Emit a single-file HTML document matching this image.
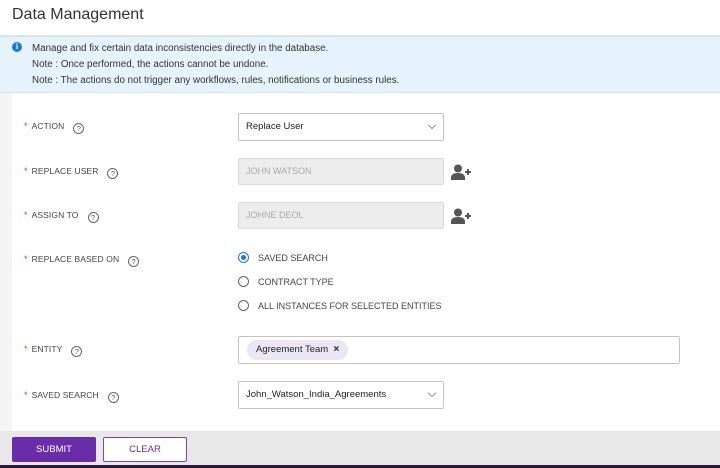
<!DOCTYPE html>
<html><head><meta charset="utf-8"><style>
*{box-sizing:border-box;margin:0;padding:0}
body{width:720px;height:468px;position:relative;background:#fff;font-family:"Liberation Sans",sans-serif;overflow:hidden;color:#333}
.abs{position:absolute}
.hdr{left:0;top:0;width:720px;height:36px;border-bottom:1px solid #e4e4e4}
.hdr span{position:absolute;left:12px;top:6px;font-size:16px;color:#333}
.info{left:0;top:36px;width:720px;height:57px;background:#e6f3fc;border-top:1px solid #cfe3f0;border-bottom:1px solid #d6e6f0;font-size:9.8px;color:#333;line-height:16px;padding:4px 0 0 32px}
.ico{left:12px;top:42px;width:10px;height:10px;border-radius:50%;background:#1a7fd6;color:#fff;font-size:8px;font-weight:bold;text-align:center;line-height:10px}
.strip{left:0;top:93px;width:12px;height:338px;background:#f4f4f4}
.lbl{left:24px;font-size:8.5px;color:#444;letter-spacing:0.1px}
.lbl b{color:#e33;font-weight:normal;margin-right:4px;font-size:9px}
.q{display:inline-block;width:11px;height:11px;border:1px solid #666;border-radius:50%;font-size:7.5px;text-align:center;line-height:9px;margin-left:9px;vertical-align:-2px;color:#555}
.box{border:1px solid #c4c4c4;border-radius:2px;background:#fff;font-size:9.5px;color:#222;padding-left:7px}
.dis{background:#ececec;border-color:#dadada;color:#aaa;font-size:9px}
.chev{position:absolute;right:8px;top:8px;width:6px;height:6px;border-right:1.3px solid #999;border-bottom:1.3px solid #999;transform:rotate(45deg)}
.rad{left:238px;width:11px;height:11px;border:1px solid #666;border-radius:50%}
.rt{left:258px;font-size:9px;color:#444}
.foot{left:0;top:431px;width:720px;height:34px;background:#e8e8e8}
.dark{left:0;top:465px;width:720px;height:3px;background:#2a1c3a}
</style></head><body>
<div class="abs hdr"><span>Data Management</span></div>
<div class="abs info">Manage and fix certain data inconsistencies directly in the database.<br>Note : Once performed, the actions cannot be undone.<br>Note : The actions do not trigger any workflows, rules, notifications or business rules.</div>
<div class="abs ico">i</div>
<div class="abs strip"></div>

<div class="abs lbl" style="top:121px"><b>*</b>ACTION<span class="q">?</span></div>
<div class="abs box" style="left:238px;top:113px;width:206px;height:28px;line-height:26px">Replace User<span class="chev"></span></div>

<div class="abs lbl" style="top:166px"><b>*</b>REPLACE USER<span class="q">?</span></div>
<div class="abs box dis" style="left:238px;top:158px;width:206px;height:27px;line-height:25px">JOHN WATSON</div>
<svg class="abs" style="left:451px;top:164px" width="22" height="17" viewBox="0 0 22 17"><circle cx="7" cy="4.5" r="4" fill="#555"/><path d="M0 16v-2.5c0-3 3-4.5 7-4.5s7 1.5 7 4.5V16z" fill="#555"/><path d="M17 5v6M14 8h6" stroke="#555" stroke-width="2"/></svg>

<div class="abs lbl" style="top:210px"><b>*</b>ASSIGN TO<span class="q">?</span></div>
<div class="abs box dis" style="left:238px;top:202px;width:206px;height:27px;line-height:25px">JOHNE DEOL</div>
<svg class="abs" style="left:451px;top:208px" width="22" height="17" viewBox="0 0 22 17"><circle cx="7" cy="4.5" r="4" fill="#555"/><path d="M0 16v-2.5c0-3 3-4.5 7-4.5s7 1.5 7 4.5V16z" fill="#555"/><path d="M17 5v6M14 8h6" stroke="#555" stroke-width="2"/></svg>

<div class="abs lbl" style="top:254px"><b>*</b>REPLACE BASED ON<span class="q">?</span></div>
<div class="abs rad" style="top:252px;border-color:#1a73e8"><div style="margin:2px;width:5px;height:5px;border-radius:50%;background:#1a73e8"></div></div>
<div class="abs rt" style="top:253px">SAVED SEARCH</div>
<div class="abs rad" style="top:276px"></div>
<div class="abs rt" style="top:277px">CONTRACT TYPE</div>
<div class="abs rad" style="top:300px"></div>
<div class="abs rt" style="top:301px">ALL INSTANCES FOR SELECTED ENTITIES</div>

<div class="abs lbl" style="top:344px"><b>*</b>ENTITY<span class="q">?</span></div>
<div class="abs box" style="left:238px;top:336px;width:442px;height:28px;padding:3px 0 0 8px"><span style="display:inline-block;background:#ece6f4;border-radius:10px;height:20px;line-height:20px;padding:0 9px;font-size:9.5px">Agreement Team&nbsp; <b style="font-size:10px">×</b></span></div>

<div class="abs lbl" style="top:390px"><b>*</b>SAVED SEARCH<span class="q">?</span></div>
<div class="abs box" style="left:238px;top:381px;width:206px;height:28px;line-height:26px">John_Watson_India_Agreements<span class="chev"></span></div>

<div class="abs foot"></div>
<div class="abs" style="left:12px;top:437px;width:84px;height:25px;background:#6a2ca8;border-radius:2px;color:#fff;font-size:9.5px;text-align:center;line-height:25px">SUBMIT</div>
<div class="abs" style="left:103px;top:437px;width:84px;height:25px;background:#fff;border:1px solid #7b43b5;border-radius:2px;color:#6a2ca8;font-size:9.5px;text-align:center;line-height:23px">CLEAR</div>
<div class="abs dark"></div>
</body></html>
